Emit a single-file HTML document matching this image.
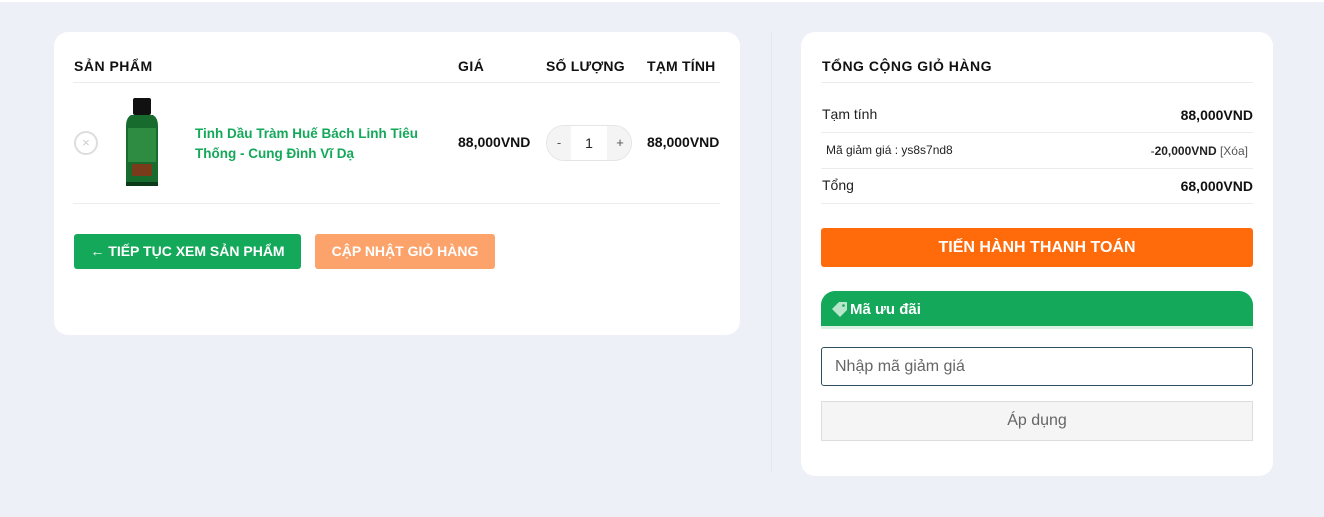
<!DOCTYPE html>
<html><head><meta charset="utf-8"><style>
*{margin:0;padding:0;box-sizing:border-box}
body{width:1324px;height:517px;background:#edf0f7;font-family:"Liberation Sans",Arial,sans-serif;position:relative;overflow:hidden;color:#111}
.top{position:absolute;left:0;top:0;width:1324px;height:2px;background:#fff}
.card{position:absolute;background:#fff;border-radius:14px}
.a{position:absolute;white-space:nowrap}
.h{font-weight:bold;font-size:14px;letter-spacing:.5px;color:#111}
.line{position:absolute;height:1px;background:#ececec}
.b{font-weight:bold;font-size:14px}
</style></head><body>
<div class="top"></div>
<div class="card" style="left:54px;top:32px;width:686px;height:303px"></div>
<div class="a h" style="left:74px;top:58px">SẢN PHẨM</div>
<div class="a h" style="left:458px;top:58px">GIÁ</div>
<div class="a h" style="left:546px;top:58px;letter-spacing:.2px">SỐ LƯỢNG</div>
<div class="a h" style="left:647px;top:58px;letter-spacing:.2px">TẠM TÍNH</div>
<div class="line" style="left:73px;top:82px;width:647px"></div>
<div class="a" style="left:74px;top:131px;width:24px;height:24px;border:2px solid #ddd;border-radius:50%;color:#ccc;font-size:13px;text-align:center;line-height:20px">×</div>
<svg class="a" style="left:120px;top:96px" width="46" height="94" viewBox="0 0 46 94">
<rect x="13" y="2" width="18" height="17" rx="2" fill="#111"/>
<path d="M11 19 H33 Q38 22 38 30 V90 H6 V30 Q6 22 11 19 Z" fill="#176b2c"/>
<rect x="8" y="32" width="28" height="34" fill="#2e8b42"/>
<rect x="12" y="68" width="20" height="12" fill="#7a3b1a"/>
<rect x="6" y="86" width="32" height="4" fill="#0b3a18"/>
</svg>
<div class="a" style="left:195px;top:124px;color:#14a85a;font-weight:bold;font-size:13.5px;line-height:20px">Tinh Dầu Tràm Huế Bách Linh Tiêu<br>Thống - Cung Đình Vĩ Dạ</div>
<div class="a b" style="left:458px;top:134px">88,000VND</div>
<div class="a" style="left:546px;top:125px;width:86px;height:36px;border:1px solid #e5e5e5;border-radius:18px;overflow:hidden">
<div class="a" style="left:0;top:0;width:24px;height:34px;background:#f4f4f4;text-align:center;line-height:34px;font-size:13px;color:#555">-</div>
<div class="a" style="left:24px;top:0;width:36px;height:34px;text-align:center;line-height:34px;font-size:14px;color:#222">1</div>
<div class="a" style="left:60px;top:0;width:26px;height:34px;background:#f4f4f4;text-align:center;line-height:34px;font-size:13px;color:#555">+</div>
</div>
<div class="a b" style="left:647px;top:134px">88,000VND</div>
<div class="line" style="left:73px;top:203px;width:647px"></div>
<div class="a" style="left:74px;top:234px;width:227px;height:35px;background:#14a85a;border-radius:3px;color:#fff;font-weight:bold;font-size:14px;text-align:center;line-height:35px">← TIẾP TỤC XEM SẢN PHẨM</div>
<div class="a" style="left:315px;top:234px;width:180px;height:35px;background:#fba36b;border-radius:3px;color:#fff;font-weight:bold;font-size:14px;text-align:center;line-height:35px">CẬP NHẬT GIỎ HÀNG</div>
<div class="a" style="left:771px;top:32px;width:1px;height:440px;background:#e4e7ee"></div>
<div class="card" style="left:801px;top:32px;width:472px;height:444px"></div>
<div class="a h" style="left:822px;top:58px">TỔNG CỘNG GIỎ HÀNG</div>
<div class="line" style="left:821px;top:82px;width:432px"></div>
<div class="a" style="left:822px;top:106px;font-size:14px;color:#222">Tạm tính</div>
<div class="a b" style="right:71px;top:107px">88,000VND</div>
<div class="line" style="left:821px;top:132px;width:432px"></div>
<div class="a" style="left:826px;top:143px;font-size:12px;color:#222">Mã giảm giá : ys8s7nd8</div>
<div class="a" style="right:76px;top:144px;font-size:12px;color:#222">-<b>20,000VND</b> <span style="color:#555">[Xóa]</span></div>
<div class="line" style="left:821px;top:168px;width:432px"></div>
<div class="a" style="left:822px;top:177px;font-size:14px;color:#222">Tổng</div>
<div class="a b" style="right:71px;top:178px">68,000VND</div>
<div class="line" style="left:821px;top:203px;width:432px"></div>
<div class="a" style="left:821px;top:228px;width:432px;height:39px;background:#ff6a0b;border-radius:3px;color:#fff;font-weight:bold;font-size:16px;text-align:center;line-height:39px">TIẾN HÀNH THANH TOÁN</div>
<div class="a" style="left:821px;top:291px;width:432px;height:38px;background:#14a85a;border-radius:14px 14px 0 0;border-bottom:3px solid #d9f0e3"></div>
<svg class="a" style="left:831px;top:301px" width="17" height="17" viewBox="0 0 17 17"><path d="M1 8 L8 1 H16 V9 L9 16 Z" fill="#b8e6cb"/><circle cx="12.5" cy="4.5" r="1.3" fill="#14a85a"/></svg>
<div class="a" style="left:850px;top:301px;color:#fff;font-weight:bold;font-size:15px">Mã ưu đãi</div>
<div class="a" style="left:821px;top:347px;width:432px;height:39px;border:1px solid #2f4f5e;border-radius:3px;font-size:16px;color:#666;padding-left:13px;line-height:37px">Nhập mã giảm giá</div>
<div class="a" style="left:821px;top:401px;width:432px;height:40px;border:1px solid #ddd;background:#f5f5f5;font-size:16px;color:#666;text-align:center;line-height:38px">Áp dụng</div>
</body></html>
